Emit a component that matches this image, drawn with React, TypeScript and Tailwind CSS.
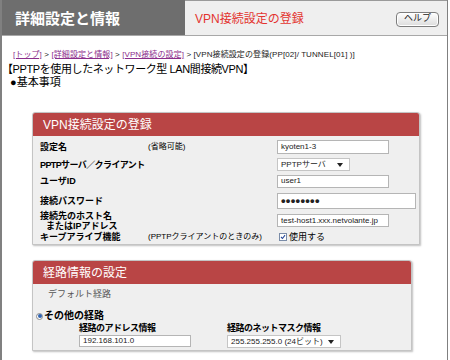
import React from "react";

function Arrow() {
  return (
    <svg width="6" height="4" viewBox="0 0 6 4" className="shrink-0">
      <path d="M0 0 L6 0 L3 4 Z" fill="#222" />
    </svg>
  );
}

function TextInput({ w, h, children, bold }: { w: string; h: string; children?: React.ReactNode; bold?: boolean }) {
  return (
    <div
      className={`${w} ${h} bg-white border border-[#b5b5b5] flex items-center pl-[3px] leading-none text-[#222] ${bold ? "font-bold tracking-[0.3px] text-[13px]" : "text-[8px]"}`}
    >
      {children}
    </div>
  );
}

function Select({ w, children }: { w: string; children: React.ReactNode }) {
  return (
    <div className={`${w} h-[13px] bg-white border border-[#c5c5c5] flex items-center justify-between pl-[3px] pr-[6px] text-[8px] leading-none text-[#222]`}>
      <span>{children}</span>
      <Arrow />
    </div>
  );
}

export default function App() {
  return (
    <div className="w-[450px] h-[360px] bg-white overflow-hidden font-['Liberation_Sans','Noto_Sans_CJK_JP',sans-serif] text-black">
      <div className="w-[448px] h-[360px] border-l-2 border-r border-[#808080] flex flex-col">
        {/* Header */}
        <div className="flex h-[36px] shrink-0 border-b border-[#a8a8a8]">
          <div className="w-[183px] bg-[#6e6e6e] text-white text-[15px] font-bold pl-[13px] pt-[4px] flex items-center">
            詳細設定と情報
          </div>
          <div className="flex-1 bg-[#efefef] border-t border-[#9a9a9a] flex items-center justify-between pl-[10px] pr-[8px] pt-[2px]">
            <span className="text-[12px] text-[#e3342f]">VPN接続設定の登録</span>
            <div className="w-[43px] h-[15px] rounded-[4px] border border-[#7d7d7d] bg-gradient-to-b from-white to-[#dcdcdc] flex items-center justify-center text-[9px] text-[#222] shadow-[inset_0_0_0_1px_#fff]">
              ヘルプ
            </div>
          </div>
        </div>

        {/* Breadcrumb */}
        <div className="mt-[14px] pl-[11px] text-[8px] leading-[10px] text-[#222] whitespace-nowrap tracking-[0.1px]">
          <span className="text-[#8b2d8b] underline">[トップ]</span>
          <span> &gt; </span>
          <span className="text-[#8b2d8b] underline">[詳細設定と情報]</span>
          <span> &gt; </span>
          <span className="text-[#8b2d8b] underline">[VPN接続の設定]</span>
          <span> &gt; [VPN接続設定の登録(PP[02]/ TUNNEL[01] )]</span>
        </div>

        <div className="mt-[3px] text-[11px] leading-[13px] whitespace-nowrap tracking-[-0.4px]">【PPTPを使用したネットワーク型 LAN間接続VPN】</div>
        <div className="pl-[8px] text-[11px] leading-[13px]">●基本事項</div>

        {/* Card 1 */}
        <div className="mt-[23px] ml-[30px] w-[388px] border border-[#c4c4c4] rounded-t-[3px] bg-[#efefef] shadow-[1px_1px_2px_rgba(0,0,0,0.25)]">
          <div className="h-[23px] bg-[#b94545] rounded-t-[2px] text-white text-[12px] pl-[10px] flex items-center">
            VPN接続設定の登録
          </div>
          <div className="pl-[7px] text-[9px] leading-[10px]">
            <div className="flex items-center h-[21px]">
              <div className="w-[108px] font-bold">設定名</div>
              <div className="w-[129px] text-[8px]">(省略可能)</div>
              <TextInput w="w-[112px]" h="h-[14px]">kyoten1-3</TextInput>
            </div>
            <div className="flex items-center h-[15px]">
              <div className="w-[237px] font-bold tracking-[-0.6px]">PPTPサーバ／クライアント</div>
              <Select w="w-[73px]">PPTPサーバ</Select>
            </div>
            <div className="flex items-center h-[18px]">
              <div className="w-[237px] font-bold">ユーザID</div>
              <TextInput w="w-[112px]" h="h-[13px]">user1</TextInput>
            </div>
            <div className="flex items-center h-[21px]">
              <div className="w-[237px] font-bold">接続パスワード</div>
              <TextInput w="w-[139px]" h="h-[16px]" bold>••••••••</TextInput>
            </div>
            <div className="flex items-center h-[19px]">
              <div className="w-[237px] font-bold">
                <div>接続先のホスト名</div>
                <div className="pl-[6px]">またはIPアドレス</div>
              </div>
              <TextInput w="w-[112px]" h="h-[13px]">test-host1.xxx.netvolante.jp</TextInput>
            </div>
            <div className="flex items-center h-[14px]">
              <div className="w-[108px] font-bold">キープアライブ機能</div>
              <div className="w-[129px] text-[8px] whitespace-nowrap">(PPTPクライアントのときのみ)</div>
              <div className="flex items-center gap-[2px] pl-[2px]">
                <span className="w-[8px] h-[8px] border border-[#7a8ca8] bg-white flex items-center justify-center">
                  <svg width="6" height="6" viewBox="0 0 6 6">
                    <path d="M1 3 L2.5 4.5 L5 1.2" stroke="#2a4b9b" strokeWidth="1.1" fill="none" />
                  </svg>
                </span>
                <span className="text-[9px]">使用する</span>
              </div>
            </div>
          </div>
        </div>

        {/* Card 2 */}
        <div className="mt-[15px] ml-[30px] w-[380px] border border-[#c4c4c4] rounded-t-[3px] bg-[#efefef] shadow-[1px_1px_2px_rgba(0,0,0,0.25)]">
          <div className="h-[23px] bg-[#b94545] rounded-t-[2px] text-white text-[12px] pl-[10px] flex items-center">
            経路情報の設定
          </div>
          <div className="text-[9px] leading-[10px] pb-[2px]">
            <div className="mt-[5px] pl-[15px] text-[#555]">デフォルト経路</div>
            <div className="mt-[12px] pl-[3px] flex items-center gap-[1px] font-bold text-[10px]">
              <span className="w-[7px] h-[7px] rounded-full border border-[#8a8a8a] bg-white flex items-center justify-center">
                <span className="w-[4px] h-[4px] rounded-full bg-[#2f62b0]" />
              </span>
              <span>その他の経路</span>
            </div>
            <div className="mt-[2px] flex">
              <div className="pl-[46px] w-[194px]">
                <div className="font-bold tracking-[-0.5px]">経路のアドレス情報</div>
                <div className="mt-[2px]">
                  <TextInput w="w-[112px]" h="h-[12px]">192.168.101.0</TextInput>
                </div>
              </div>
              <div>
                <div className="font-bold tracking-[-0.5px]">経路のネットマスク情報</div>
                <div className="mt-[2px]">
                  <Select w="w-[114px]">255.255.255.0 (24ビット)</Select>
                </div>
              </div>
            </div>
          </div>
        </div>
      </div>
    </div>
  );
}
